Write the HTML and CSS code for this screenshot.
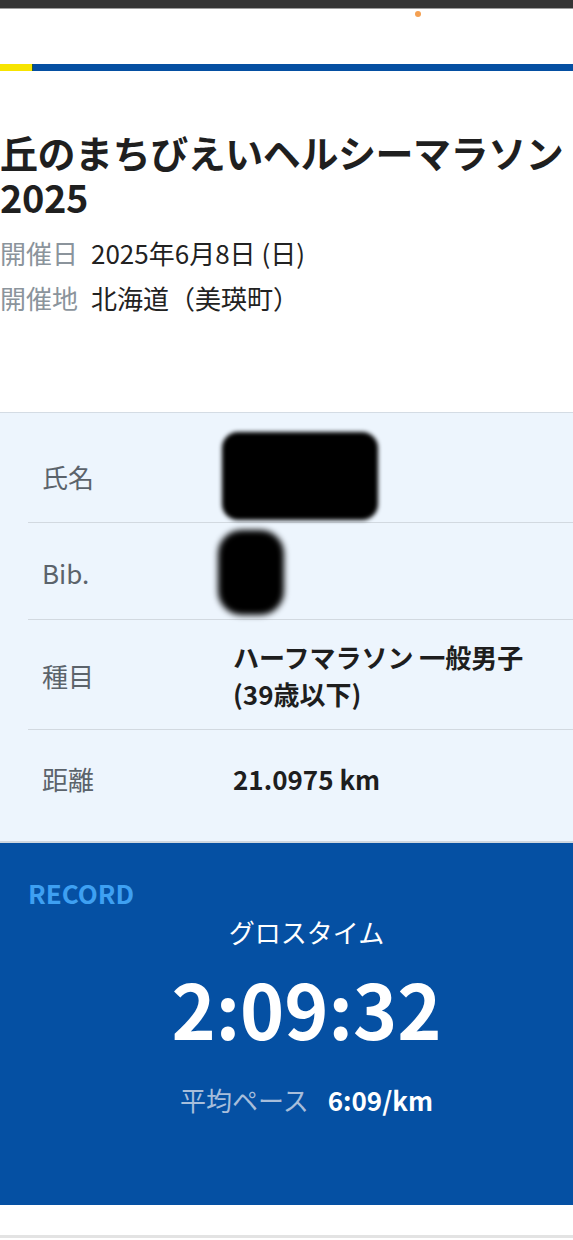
FILE: index.html
```html
<!DOCTYPE html>
<html lang="ja">
<head>
<meta charset="utf-8">
<title>丘のまちびえいヘルシーマラソン2025</title>
<link rel="stylesheet" href="styles.css">
</head>
<body>
<div class="topbar"><span class="dot"></span></div>
<div class="stripe"><span class="stripe-yellow"></span><span class="stripe-blue"></span></div>

<section class="event">
  <h1 class="event-title">丘のまちびえいヘルシーマラソン 2025</h1>
  <dl class="meta">
    <div class="meta-row"><dt>開催日</dt><dd>2025年6月8日 (日)</dd></div>
    <div class="meta-row"><dt>開催地</dt><dd>北海道（美瑛町）</dd></div>
  </dl>
</section>

<section class="info">
  <div class="row row-name">
    <div class="label">氏名</div>
    <div class="value"><div class="redact redact-name"></div></div>
  </div>
  <div class="row row-bib">
    <div class="label">Bib.</div>
    <div class="value"><div class="redact redact-bib"></div></div>
  </div>
  <div class="row row-cat">
    <div class="label">種目</div>
    <div class="value">ハーフマラソン 一般男子<br>(39歳以下)</div>
  </div>
  <div class="row row-dist">
    <div class="label">距離</div>
    <div class="value">21.0975 km</div>
  </div>
</section>

<section class="record">
  <div class="record-label">RECORD</div>
  <div class="record-body">
    <div class="record-kind">グロスタイム</div>
    <div class="record-time">2:09:32</div>
    <div class="record-pace"><span class="pace-label">平均ペース</span><span class="pace-value">6:09/km</span></div>
  </div>
</section>

<div class="footer"></div>
</body>
</html>
```

FILE: styles.css
```css
* { box-sizing: border-box; }
html, body { margin: 0; padding: 0; background: #fff; }
body {
  font-family: "Noto Sans CJK JP", "Noto Sans", sans-serif;
  color: #222;
  width: 573px;
  overflow: hidden;
}

.topbar {
  position: relative;
  height: 9px;
  background: #343434;
  border-bottom: 1px solid #9c9c9c;
}
.dot {
  position: absolute;
  left: 415px;
  top: 11px;
  width: 6px;
  height: 6px;
  border-radius: 50%;
  background: #f4a052;
}

.stripe {
  display: flex;
  height: 7px;
  margin-top: 55px;
}
.stripe-yellow { width: 33px; background: #f7e400; border-right: 1px solid #2a5b3a; }
.stripe-blue { flex: 1; background: #054fa2; }

.event { padding: 58px 0 0 0; }
.event-title {
  margin: 0;
  font-size: 38px;
  line-height: 45px;
  font-weight: 700;
  color: #1f1f1f;
  letter-spacing: -0.45px;
}
.meta { margin: 11px 0 0 0; }
.meta-row { display: flex; font-size: 26px; line-height: 45px; }
.meta-row dt { color: #8b949c; width: 91px; }
.meta-row dd { margin: 0; color: #222; }

.info {
  margin-top: 92px;
  background: #edf5fd;
  border-top: 1px solid #d4dce4;
  border-bottom: 2px solid #cfd7df;
}
.row {
  display: grid;
  grid-template-columns: 205px 1fr;
  align-items: center;
  margin-left: 28px;
  border-bottom: 1px solid #d2d9e0;
}
.row-name { padding: 19px 0 2px; }
.row-bib { padding: 7px 0 4px; }
.row-cat { padding: 18px 0 17px; }
.row-dist { padding: 30px 0 44px; border-bottom: none; }
.label {
  padding-left: 14px;
  font-size: 26px;
  color: #5b636b;
}
.value {
  font-size: 26px;
  line-height: 37px;
  font-weight: 700;
  color: #1e1e1e;
}
.redact {
  background: #000;
  filter: blur(2px);
  margin-left: -11px;
}
.redact-name { width: 156px; height: 88px; border-radius: 16px; }
.redact-bib { width: 66px; height: 85px; border-radius: 24px; margin-left: -15px; filter: blur(3px); }

.record {
  background: #0550a3;
  padding: 34px 0 0 28px;
  height: 362px;
}
.record-label {
  font-size: 26px;
  line-height: 31px;
  font-weight: 700;
  color: #3ea0f2;
}
.record-body {
  padding-left: 12px;
  text-align: center;
  color: #fff;
}
.record-kind {
  font-size: 26px;
  line-height: 36px;
  margin-top: 6px;
}
.record-time {
  font-size: 75px;
  line-height: 75px;
  font-weight: 700;
  margin-top: 20px;
}
.record-pace {
  margin-top: 37px;
  font-size: 26px;
  line-height: 36px;
}
.pace-label { color: #a7bedb; margin-right: 19px; }
.pace-value { font-weight: 700; color: #fff; }

.footer {
  height: 33px;
  border-bottom: 3px solid #e3e3e3;
  margin-bottom: 20px;
}
```
